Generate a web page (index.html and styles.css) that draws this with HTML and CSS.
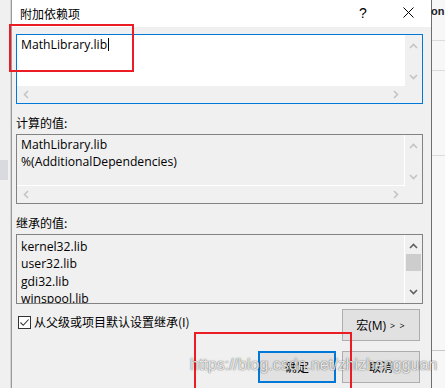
FILE: index.html
```html
<!DOCTYPE html>
<html lang="zh-CN">
<head>
<meta charset="utf-8">
<title>附加依赖项</title>
<link rel="stylesheet" href="styles.css">
</head>
<body>
<div class="screen">
  <div class="left-strip"><div class="sel-block"></div></div>
  <div class="dialog">
    <div class="titlebar">
      <span class="title">附加依赖项</span>
      <span class="help">?</span>
      <span class="close">
        <svg width="11" height="11" viewBox="0 0 11 11"><path d="M0.5 0.5 L10.5 10.5 M10.5 0.5 L0.5 10.5" stroke="#000" stroke-width="1" fill="none"/></svg>
      </span>
    </div>
    <div class="body">
      <div class="editbox active">
        <div class="content white"><div class="line">MathLibrary.lib<span class="caret"></span></div></div>
        <div class="vscroll">
          <svg class="chev" width="9" height="6" viewBox="0 0 9 6"><path d="M1 5 L4.5 1.5 L8 5" stroke="#c4c4c4" stroke-width="1.6" fill="none"/></svg>
          <svg class="chev" width="9" height="6" viewBox="0 0 9 6"><path d="M1 1 L4.5 4.5 L8 1" stroke="#c4c4c4" stroke-width="1.6" fill="none"/></svg>
        </div>
        <div class="hscroll">
          <svg width="6" height="9" viewBox="0 0 6 9"><path d="M5 1 L1.5 4.5 L5 8" stroke="#c4c4c4" stroke-width="1.6" fill="none"/></svg>
          <svg width="6" height="9" viewBox="0 0 6 9"><path d="M1 1 L4.5 4.5 L1 8" stroke="#c4c4c4" stroke-width="1.6" fill="none"/></svg>
        </div>
        <div class="corner"></div>
      </div>

      <div class="label">计算的值:</div>
      <div class="editbox">
        <div class="content sep"><div class="line">MathLibrary.lib</div><div class="line">%(AdditionalDependencies)</div></div>
        <div class="vscroll">
          <svg class="chev" width="9" height="6" viewBox="0 0 9 6"><path d="M1 5 L4.5 1.5 L8 5" stroke="#c4c4c4" stroke-width="1.6" fill="none"/></svg>
          <svg class="chev" width="9" height="6" viewBox="0 0 9 6"><path d="M1 1 L4.5 4.5 L8 1" stroke="#c4c4c4" stroke-width="1.6" fill="none"/></svg>
        </div>
        <div class="hscroll">
          <svg width="6" height="9" viewBox="0 0 6 9"><path d="M5 1 L1.5 4.5 L5 8" stroke="#c4c4c4" stroke-width="1.6" fill="none"/></svg>
          <svg width="6" height="9" viewBox="0 0 6 9"><path d="M1 1 L4.5 4.5 L1 8" stroke="#c4c4c4" stroke-width="1.6" fill="none"/></svg>
        </div>
        <div class="corner"></div>
      </div>

      <div class="label">继承的值:</div>
      <div class="editbox noh">
        <div class="content sepv lower"><div class="line">kernel32.lib</div><div class="line">user32.lib</div><div class="line">gdi32.lib</div><div class="line">winspool.lib</div></div>
        <div class="vscroll dark">
          <svg class="chev" width="9" height="6" viewBox="0 0 9 6"><path d="M1 5 L4.5 1.5 L8 5" stroke="#606060" stroke-width="1.6" fill="none"/></svg>
          <div class="thumb"></div>
          <div class="spacer"></div>
          <svg class="chev" width="9" height="6" viewBox="0 0 9 6"><path d="M1 1 L4.5 4.5 L8 1" stroke="#606060" stroke-width="1.6" fill="none"/></svg>
        </div>
      </div>

      <div class="row1">
        <label class="check">
          <span class="box"><svg width="11" height="11" viewBox="0 0 11 11"><path d="M1.5 5.5 L4.2 8.3 L9.6 2.5" stroke="#333" stroke-width="1.1" fill="none"/></svg></span>
          <span class="check-text">从父级或项目默认设置继承(I)</span>
        </label>
        <div class="btn">宏(M) <span class="gt">&gt; &gt;</span></div>
      </div>
      <div class="row2">
        <div class="btn primary">确定</div>
        <div class="btn">取消</div>
      </div>
    </div>
  </div>
  <div class="right-strip">
    <div class="peek">on<span class="dot">.</span></div>
    <div class="rline l1"></div>
    <div class="rline l2"></div>
    <div class="rline l3"></div>
    <div class="rline l4"></div>
  </div>

  <div class="redbox r1"></div>
  <div class="redbox r2"></div>
  <div class="watermark">https://blog.csdn.net/zhizhengguan</div>
</div>
</body>
</html>
```

FILE: styles.css
```css
* { box-sizing: border-box; }
html, body { margin: 0; padding: 0; }
body {
  width: 445px;
  height: 388px;
  overflow: hidden;
  background: #f3f3f3;
  font-family: "Open Sans", "Noto Sans CJK SC", sans-serif;
  font-size: 12px;
  color: #000;
}
.screen {
  position: relative;
  display: flex;
  width: 445px;
  height: 388px;
  overflow: hidden;
}
.left-strip {
  width: 11px;
  flex: none;
  background: #f0f0f0;
  border-right: 1px solid #d4d4d4;
  padding-top: 160px;
}
.sel-block { width: 8px; height: 20px; background: #d9d9e0; }

.dialog {
  width: 421px;
  flex: none;
  height: 410px;
  background: #f0f0f0;
  border-left: 1px solid #9a9a9a;
  border-right: 1px solid #6e6e6e;
  box-shadow: 1px 0 0 #a8a8a8;
  display: flex;
  flex-direction: column;
}
.titlebar {
  height: 27px;
  background: #fff;
  display: flex;
  align-items: center;
  padding-left: 8px;
  font-family: "Noto Sans CJK SC", sans-serif;
}
.title { font-size: 12px; flex: 1; padding-bottom: 1px; }
.help {
  font-family: "Liberation Sans", sans-serif;
  font-size: 14px;
  width: 12px;
  margin-right: 32px;
  padding-bottom: 2px;
}
.close { width: 11px; height: 11px; margin-right: 17px; display: flex; margin-bottom: 2px; }

.body {
  padding: 7px 8px 0 4px;
  display: flex;
  flex-direction: column;
}
.editbox {
  height: 70px;
  border: 1px solid #828282;
  display: grid;
  grid-template-columns: 1fr 17px;
  grid-template-rows: 1fr 17px;
  background: #f0f0f0;
}
.editbox.active { border-color: #0078d7; }
.editbox.noh { grid-template-rows: 1fr; }
.content {
  padding: 1px 0 0 4px;
  overflow: hidden;
  line-height: 17px;
  font-size: 12.2px;
}
.content.lower { padding-top: 3px; line-height: 17.3px; }
.content.white { background: #fff; }
.content.sep { border-right: 1px solid #fff; border-bottom: 1px solid #fff; }
.content.sepv { border-right: 1px solid #fff; }
.line { white-space: nowrap; }
.caret {
  display: inline-block;
  width: 1px;
  height: 13px;
  background: #000;
  vertical-align: -2px;
  margin-left: 1px;
}
.vscroll {
  display: flex;
  flex-direction: column;
  align-items: center;
  justify-content: space-between;
  padding: 8px 0 6px;
}
.vscroll.dark { padding: 8px 0 8px; justify-content: flex-start; }
.vscroll .chev { display: block; flex: none; }
.thumb {
  width: 15px;
  height: 17px;
  background: #cdcdcd;
  margin-top: 5px;
  flex: none;
}
.spacer { flex: 1; }
.hscroll {
  display: flex;
  align-items: center;
  justify-content: space-between;
  padding: 0 6px 0 6px;
}
.corner { background: #f0f0f0; }

.label {
  font-family: "Noto Sans CJK SC", sans-serif;
  line-height: 16px;
  padding-top: 11px;
  margin-bottom: 3px;
}

.row1 {
  display: flex;
  justify-content: space-between;
  align-items: flex-start;
  padding-top: 5px;
  padding-right: 3px;
}
.check {
  display: flex;
  align-items: center;
  margin-top: 5px;
  margin-left: 2px;
  font-family: "Noto Sans CJK SC", sans-serif;
}
.box {
  width: 13px;
  height: 13px;
  border: 1px solid #333;
  background: #fff;
  display: flex;
  align-items: center;
  justify-content: center;
  flex: none;
}
.check-text { margin-left: 3px; line-height: 16px; }
.btn {
  width: 78px;
  height: 32px;
  border: 1px solid #adadad;
  background: #e1e1e1;
  display: flex;
  align-items: center;
  justify-content: center;
  font-family: "Open Sans", "Noto Sans CJK SC", sans-serif;
  font-size: 12px;
}
.btn .gt { font-size: 9px; margin-left: 4px; letter-spacing: 1px; }
.btn.primary { border: 2px solid #0078d7; }
.row2 {
  display: flex;
  justify-content: flex-end;
  gap: 6px;
  margin-top: 10px;
  padding-right: 3px;
}

.right-strip {
  flex: 1;
  position: relative;
  background: #f7f7f7;
}
.peek {
  position: absolute;
  left: -1px;
  top: 5px;
  font-family: "Liberation Sans", sans-serif;
  font-weight: bold;
  font-size: 11px;
  color: #222;
  white-space: nowrap;
}
.peek .dot { color: #e8a33a; }
.rline { position: absolute; left: 0; right: 0; height: 1px; background: #dcdcdc; }
.l1 { top: 40px; }
.l2 { top: 70px; }
.l3 { top: 155px; }
.l4 { top: 350px; background: #c8c8c8; }

.redbox {
  position: absolute;
  border: 2px solid #ec1c24;
}
.r1 { left: 9px; top: 24px; width: 125px; height: 48px; }
.r2 { left: 194px; top: 332px; width: 158px; height: 80px; }

.watermark {
  position: absolute;
  left: 190px;
  top: 356px;
  font-family: "Liberation Sans", sans-serif;
  font-size: 16px;
  color: rgba(255, 255, 255, 0.85);
  text-shadow: 0 0 1px rgba(0, 0, 0, 0.6), 0 0 2px rgba(0, 0, 0, 0.25);
  white-space: nowrap;
}
```
